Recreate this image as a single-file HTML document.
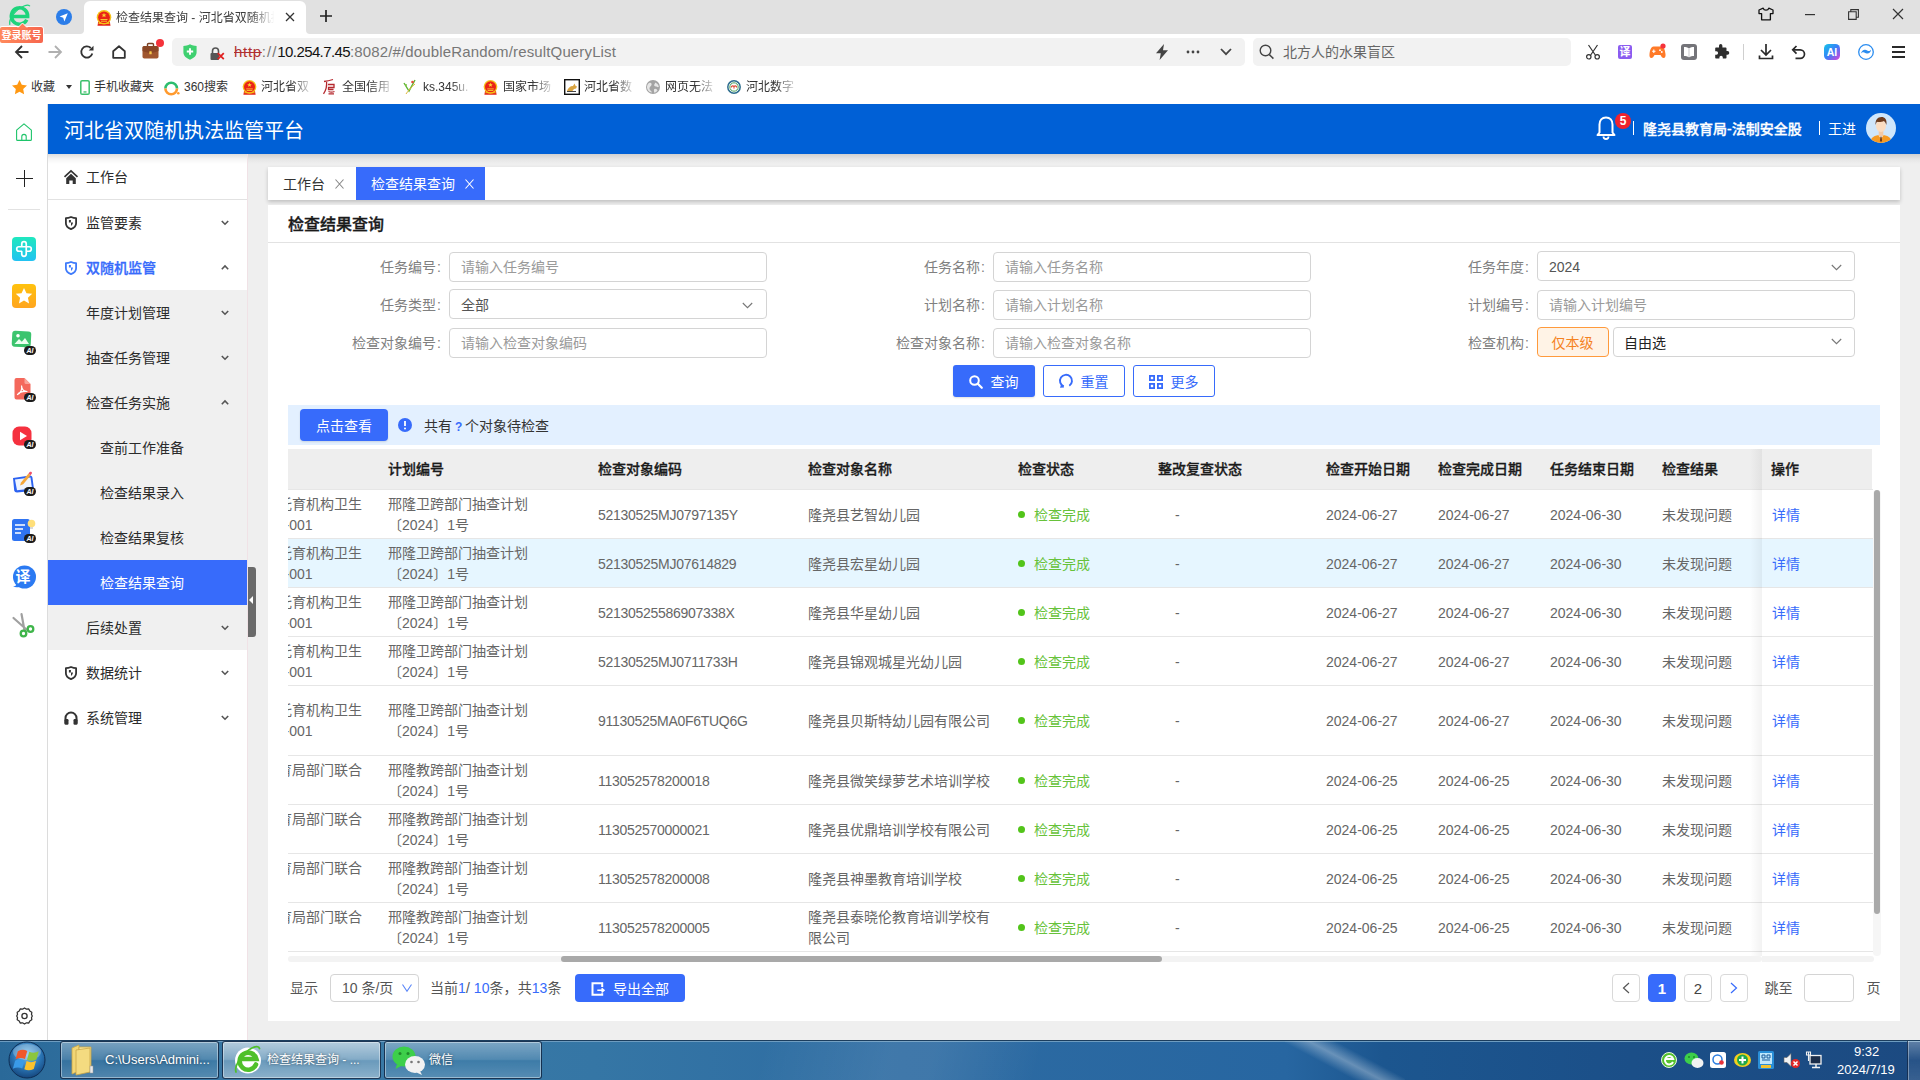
<!DOCTYPE html>
<html lang="zh-CN"><head><meta charset="utf-8"><title>检查结果查询 - 河北省双随机执法监管平台</title>
<style>
*{box-sizing:border-box;margin:0;padding:0}
html,body{width:1920px;height:1080px;overflow:hidden;background:#fff}
body{font-family:"Liberation Sans","Noto Sans CJK SC",sans-serif;font-size:14px;color:#333;position:relative}
.a{position:absolute}
.t{position:absolute;white-space:nowrap;line-height:20px;height:20px}
svg{position:absolute;overflow:visible}
#tabbar{left:0;top:0;width:1920px;height:34px;background:#e1e1e1}
#acttab{left:84px;top:1px;width:222px;height:33px;background:#fff;border-radius:6px 6px 0 0}
#addr{left:0;top:34px;width:1920px;height:36px;background:#fff}
#urlbox{left:172px;top:38px;width:1073px;height:28px;background:#f2f2f2;border-radius:5px}
#sbox{left:1253px;top:38px;width:318px;height:28px;background:#f2f2f2;border-radius:5px}
#bm{left:0;top:70px;width:1920px;height:34px;background:#fff}
.bmt{font-size:12px;color:#333}
#lside{left:0;top:104px;width:48px;height:936px;background:#fff;border-right:1px solid #dcdcdc}
#hdr{left:48px;top:104px;width:1872px;height:50px;background:#0060d6}
#menu{left:48px;top:154px;width:199px;height:886px;background:#fff}
#sub{left:48px;top:290px;width:199px;height:360px;background:#f0f0f0}
#act{left:48px;top:560px;width:199px;height:45px;background:#376bfb}
.mi{font-size:14px;color:#2b2b2b}
#content{left:247px;top:154px;width:1673px;height:886px;background:#efefef;border-left:1px solid #f0e2e6}
#tabs{left:268px;top:167px;width:1632px;height:33px;background:#fff;box-shadow:0 2px 4px rgba(0,0,0,.2)}
#tab2{left:356px;top:167px;width:129px;height:33px;background:#376bfb}
#panel{left:268px;top:205px;width:1632px;height:816px;background:#fff}
.lbl{color:#808080;text-align:right;width:160px}
.inp{position:absolute;height:30px;border:1px solid #d4d4d4;border-radius:4px;background:#fff}
.ph{color:#9a9a9a}
.btn{position:absolute;height:32px;border-radius:3px}
.th{font-weight:500;color:#1a1a1a;-webkit-text-stroke:0.3px}
.td{color:#666}
.row{position:absolute;left:288px;width:1585px;border-bottom:1px solid #e6e6e6}
.ok{color:#67c23a}
.lnk{color:#376bfb}
.pg{position:absolute;top:974px;width:28px;height:28px;border:1px solid #d9d9d9;border-radius:4px;background:#fff;text-align:center;line-height:27px;color:#444;font-size:15px}
#task{left:0;top:1040px;width:1920px;height:40px;background:linear-gradient(90deg,#2a6999 0%,#3a7aa6 15%,#3576a5 31%,#2d6ba2 47%,#2766a1 67%,#1c568f 72%,#1b4f88 85%,#1c4a81 100%);border-top:1px solid #1c3e5e;box-shadow:inset 0 1px 0 #6d9cc0}
.tb{position:absolute;top:1041px;height:38px;border:1px solid rgba(15,40,70,.9);border-radius:3px;box-shadow:inset 0 0 0 1px rgba(255,255,255,.4);background:linear-gradient(180deg,rgba(255,255,255,.35),rgba(255,255,255,.14) 48%,rgba(255,255,255,.04) 52%,rgba(255,255,255,.16))}
.tbt{font-size:12px;color:#fff;text-shadow:0 0 3px rgba(0,0,0,.55)}
.ai{position:absolute;left:24px;width:12px;height:9px;border-radius:5px;background:#1c1c1c;color:#fff;font-size:7px;font-weight:bold;line-height:9px;text-align:center;font-style:italic}
</style></head>
<body>
<!-- browser chrome -->
<div class="a " id="tabbar" style=""></div>
<div class="a " id="acttab" style=""></div>
<svg style="left:80px;top:30px" width="4" height="4" viewBox="0 0 4 4"><path d="M4 0v4H0a4 4 0 0 0 4-4z" fill="#fff"/></svg>
<svg style="left:306px;top:30px" width="4" height="4" viewBox="0 0 4 4"><path d="M0 0v4h4a4 4 0 0 1-4-4z" fill="#fff"/></svg>
<div class="a " id="addr" style=""></div>
<div class="a " id="urlbox" style=""></div>
<div class="a " id="sbox" style=""></div>
<div class="a " id="bm" style=""></div>
<svg style="left:7px;top:3px" width="26" height="26" viewBox="0 0 26 26"><g fill="none" stroke="#1fd47c" stroke-linecap="butt"><path d="M19.800 16.800a8.200 8.200 0 1 1 .9-3.300H5.500" stroke-width="3.500"/><path d="M2.800 21.800C1.500 16 8 7 17 3c3-1.300 5.200-1.300 5.800 .3" stroke-width="1.300"/></g></svg>
<div class="a " style="left:-1px;top:26px;width:45px;height:18px;border:1px solid #fff;border-radius:3px;background:linear-gradient(90deg,#ff8a5c,#f7664e)"></div>
<svg style="left:18px;top:21px" width="9" height="7" viewBox="0 0 9 7"><path d="M0 6.500l4.500-4.500 4.500 4.500" fill="#ff7c58" stroke="#fff" stroke-width="1"/><rect x="1" y="6" width="7" height="1.500" fill="#ff7c58"/></svg>
<div class="t " style="left:1.5px;top:25px;font-size:10px;color:#fff;font-weight:bold;line-height:16px;height:16px;top:27.500px">登录账号</div>
<svg style="left:56px;top:9px" width="16" height="16" viewBox="0 0 16 16"><circle cx="8" cy="8" r="8" fill="#2b7de9"/><path d="M11.8 4.2L3.6 7.6l3.6 1.2 1.2 3.6z" fill="#fff"/></svg>
<svg style="left:96px;top:10px" width="16" height="16" viewBox="0 0 16 16"><g transform="scale(1.000)"><path d="M2.200 11.500h11.600l.7 4.300H1.500z" fill="#e3241b"/><circle cx="8" cy="7.300" r="7.300" fill="#f5c21a"/><circle cx="8" cy="7.300" r="5.900" fill="#ea2416"/><path d="M8 2.800l.7 1.700h1.800l-1.400 1.100.5 1.700L8 6.300l-1.600 1 .5-1.700-1.400-1.100h1.800z" fill="#f9d633"/><path d="M4.500 9.500h7M5 11.200h6" stroke="#f9d633" stroke-width=".9"/><path d="M2.500 13.500h11" stroke="#f5c21a" stroke-width=".9"/></g></svg>
<div class="t " style="left:116px;top:8px;font-size:12px;color:#3c3c3c;width:160px;overflow:hidden;-webkit-mask-image:linear-gradient(90deg,#000 84%,transparent 99%)">检查结果查询 - 河北省双随机执</div>
<svg style="left:285px;top:12.2px" width="10" height="10" viewBox="0 0 10 10"><path d="M1 1l8 8M9 1l-8 8" stroke="#333" stroke-width="1.3" fill="none"/></svg>
<svg style="left:319px;top:9px" width="14" height="14" viewBox="0 0 14 14"><path d="M7 1v12M1 7h12" stroke="#222" stroke-width="1.7" fill="none"/></svg>
<svg style="left:1758px;top:7px" width="16" height="14" viewBox="0 0 16 14"><path d="M5.2 1.2L1 3v3.6h2.6v6.2h8.8V6.6H15V3l-4.2-1.8c-.4 1.4-1.4 2-2.8 2s-2.4-.6-2.800-2z" fill="none" stroke="#111" stroke-width="1.3" stroke-linejoin="round"/></svg>
<svg style="left:1805px;top:14px" width="10" height="1" viewBox="0 0 10 1"><rect width="10" height="1.2" fill="#333"/></svg>
<svg style="left:1848px;top:9px" width="11" height="11" viewBox="0 0 11 11"><path d="M.6 2.8h7.6v7.6H.6zM2.8 2.600V.6h7.6v7.6H8.400" fill="none" stroke="#333" stroke-width="1.1"/></svg>
<svg style="left:1893px;top:9px" width="10" height="10" viewBox="0 0 10 10"><path d="M0 0l10 10M10 0L0 10" stroke="#333" stroke-width="1.2" fill="none"/></svg>
<svg style="left:15px;top:45px" width="14" height="14" viewBox="0 0 14 14"><path d="M13.500 7H1.500M7 1L1 7l6 6" fill="none" stroke="#333" stroke-width="1.8"/></svg>
<svg style="left:48px;top:45px" width="14" height="14" viewBox="0 0 14 14"><path d="M.5 7h12M7 1l6 6-6 6" fill="none" stroke="#b0b0b0" stroke-width="1.8"/></svg>
<svg style="left:80px;top:45px" width="14" height="14" viewBox="0 0 14 14"><path d="M12.300 8.500A5.600 5.600 0 1 1 10.800 3" fill="none" stroke="#333" stroke-width="1.8"/><path d="M13.500.8v4.800H8.700z" fill="#333"/></svg>
<svg style="left:112px;top:45px" width="14" height="14" viewBox="0 0 14 14"><path d="M1.200 6.200L7 1.200l5.800 5v6.600H1.200z" fill="none" stroke="#333" stroke-width="1.8" stroke-linejoin="round"/></svg>
<svg style="left:142px;top:43px" width="17" height="16" viewBox="0 0 17 16"><path d="M5.500 3V1.600C5.500 1 6 .5 6.600.5h3.800c.6 0 1.100.5 1.100 1.100V3" fill="none" stroke="#7a3f22" stroke-width="1.400"/><rect x=".5" y="3" width="16" height="12.500" rx="1.800" fill="#a0562e"/><path d="M.5 4.800C.5 3.800 1.300 3 2.300 3h12.400c1 0 1.800.8 1.800 1.800V8c-2.500 1.200-5.200 1.800-8 1.800S3 9.200.5 8z" fill="#8a4726"/><rect x="7.300" y="8.300" width="2.400" height="3" rx=".5" fill="#f5c84a"/></svg>
<svg style="left:156px;top:39px" width="8" height="8" viewBox="0 0 8 8"><circle cx="4" cy="4" r="4" fill="#f5333b"/></svg>
<svg style="left:183px;top:44px" width="14" height="16" viewBox="0 0 14 16"><path d="M7 .3C4.800 1.400 2.600 2 .4 2v6.300c0 3.300 2.600 5.900 6.600 7.400 4-1.500 6.600-4.100 6.600-7.400V2C11.400 2 9.200 1.400 7 .3z" fill="#3fd070"/><path d="M7 4.300v6.400M3.800 7.500h6.400" stroke="#fff" stroke-width="1.900"/></svg>
<svg style="left:208px;top:46px" width="18" height="18" viewBox="0 0 18 18"><path d="M4.500 7V5a3 3 0 0 1 6 0v2" fill="none" stroke="#555" stroke-width="1.600"/><rect x="2.500" y="7" width="8.500" height="7" rx="1" fill="#555"/><path d="M9.800 7.200l6 6M15.800 7.200l-6 6" stroke="#e02020" stroke-width="1.800"/></svg>
<div class="t " style="left:234px;top:42px;font-size:15px"><span style="color:#b03030;text-decoration:line-through;letter-spacing:0.7px">http</span><span style="color:#777;letter-spacing:1.0px">://</span><span style="color:#111;letter-spacing:-0.6px">10.254.7.45</span><span style="color:#777;letter-spacing:0.14px">:8082/#/doubleRandom/resultQueryList</span></div>
<svg style="left:1156px;top:44px" width="12" height="16" viewBox="0 0 12 16"><path d="M8 0L0 9.200h4.800L3.600 16 12 6.200H7z" fill="#444"/></svg>
<svg style="left:1186px;top:50px" width="14" height="4" viewBox="0 0 14 4"><circle cx="2" cy="2" r="1.400" fill="#444"/><circle cx="7" cy="2" r="1.400" fill="#444"/><circle cx="12" cy="2" r="1.400" fill="#444"/></svg>
<svg style="left:1220px;top:48px" width="12" height="8" viewBox="0 0 12 8"><path d="M1 1l5 5.200L11 1" fill="none" stroke="#444" stroke-width="1.800"/></svg>
<svg style="left:1259px;top:44px" width="16" height="16" viewBox="0 0 16 16"><circle cx="6.500" cy="6.500" r="5.300" fill="none" stroke="#444" stroke-width="1.400"/><path d="M10.400 10.600l4 4" stroke="#444" stroke-width="1.500"/></svg>
<div class="t " style="left:1283px;top:42px;font-size:14px;color:#666">北方人的水果盲区</div>
<svg style="left:1586px;top:45px" width="14" height="15" viewBox="0 0 14 15"><path d="M2.500 0l6.800 10M11.500 0L4.700 10" stroke="#333" stroke-width="1.200" fill="none"/><circle cx="2.800" cy="11.800" r="2.200" fill="none" stroke="#333" stroke-width="1.200"/><circle cx="11.200" cy="11.800" r="2.200" fill="none" stroke="#333" stroke-width="1.200"/></svg>
<div class="a " style="left:1618px;top:45px;width:14px;height:14px;border-radius:2px;background:#8b5cf0"></div>
<div class="t " style="left:1619.5px;top:42px;font-size:11px;color:#fff;font-weight:bold;line-height:14px;height:14px;top:45px">译</div>
<svg style="left:1649px;top:45px" width="17" height="14" viewBox="0 0 17 14"><path d="M4.500 1.500h8c2.500 0 3.600 4 4 7.500.3 2.800-.5 4-1.800 4-1.400 0-2.200-1.200-3.200-3h-6c-1 1.800-1.800 3-3.200 3C1 13 .2 11.800.5 9 .9 5.500 2 1.500 4.500 1.500z" fill="#ff7a28"/><path d="M4.800 4.500v3.400M3.100 6.200h3.400" stroke="#fff" stroke-width="1.100"/><circle cx="11" cy="5.200" r=".9" fill="#fff"/><circle cx="12.800" cy="7" r=".9" fill="#fff"/></svg>
<svg style="left:1660px;top:43px" width="6" height="6" viewBox="0 0 6 6"><circle cx="3" cy="3" r="2.600" fill="#f5333b"/></svg>
<svg style="left:1681px;top:44px" width="16" height="16" viewBox="0 0 16 16"><rect width="16" height="16" rx="3" fill="#747479"/><path d="M8 4.200c-1.500-1-3.200-1.300-5-1.300v9c1.800 0 3.500.3 5 1.300 1.500-1 3.200-1.300 5-1.300v-9c-1.800 0-3.500.3-5 1.300z" fill="#fff"/><path d="M8 4.200v9" stroke="#c9c9cc" stroke-width="1"/></svg>
<svg style="left:1713px;top:44px" width="16" height="16" viewBox="0 0 16 16"><path d="M6 1.800a1.700 1.700 0 0 1 3.400 0V3.500h3.300c.5 0 .8.300.8.800v2.800h1a1.800 1.800 0 0 1 0 3.600h-1v3c0 .5-.3.800-.8.800H9.800v-1.100a1.700 1.700 0 0 0-3.400 0v1.100H3c-.5 0-.8-.3-.8-.8v-3h1.200a1.700 1.700 0 0 0 0-3.400H2.200V4.300c0-.5.300-.8.800-.8h3z" fill="#2e2e2e"/></svg>
<div class="a " style="left:1743px;top:44px;width:1px;height:16px;background:#cfcfcf"></div>
<svg style="left:1759px;top:44px" width="14" height="16" viewBox="0 0 14 16"><path d="M7 0v10.500M2 6l5 5 5-5" fill="none" stroke="#2a2a2a" stroke-width="1.700"/><path d="M.5 11.500v3h13v-3" fill="none" stroke="#2a2a2a" stroke-width="1.700"/></svg>
<svg style="left:1791px;top:45px" width="15" height="15" viewBox="0 0 15 15"><path d="M2 4.800h7.200a4.300 4.300 0 0 1 0 8.600H4.500" fill="none" stroke="#2a2a2a" stroke-width="1.700"/><path d="M5.500 1L1.700 4.800l3.800 3.800" fill="none" stroke="#2a2a2a" stroke-width="1.700"/></svg>
<svg style="left:1824px;top:44px" width="16" height="16" viewBox="0 0 16 16"><defs><linearGradient id="aig" x1="0" y1="0" x2="1" y2="1"><stop offset="0" stop-color="#13c8e8"/><stop offset=".5" stop-color="#3a7df8"/><stop offset="1" stop-color="#e040d8"/></linearGradient></defs><rect width="16" height="16" rx="4.500" fill="url(#aig)"/><text x="8" y="11.800" font-size="10.500" font-weight="bold" fill="#fff" text-anchor="middle" font-family="Liberation Sans,sans-serif">AI</text></svg>
<svg style="left:1858px;top:44px" width="16" height="16" viewBox="0 0 16 16"><circle cx="8" cy="8" r="7.300" fill="#fff" stroke="#2b8df0" stroke-width="1.300"/><path d="M2.800 9.500c1-2.800 3-4.300 5.200-3.500s3.200 2 5.200-.5c-.5 3-2.800 4.800-5.200 3.800S4.800 7.500 2.800 9.500z" fill="#2b8df0"/></svg>
<svg style="left:1892px;top:46px" width="13" height="12" viewBox="0 0 13 12"><path d="M0 1h13M0 6h13M0 11h13" stroke="#2a2a2a" stroke-width="1.900"/></svg>
<svg style="left:12px;top:80px" width="15" height="14" viewBox="0 0 15 14"><path d="M7.500 0l2.300 4.800 5.200.7-3.800 3.600.9 5.100-4.600-2.500-4.600 2.500.9-5.100L0 5.500l5.200-.7z" fill="#ff9812"/></svg>
<svg style="left:66px;top:85px" width="6" height="4" viewBox="0 0 6 4"><path d="M0 0h6L3 4z" fill="#333"/></svg>
<svg style="left:80px;top:80px" width="10" height="15" viewBox="0 0 10 15"><rect x=".8" y=".8" width="8.400" height="13.400" rx="1.300" fill="#fff" stroke="#3cc06c" stroke-width="1.500"/><rect x="3.500" y="11.300" width="3" height="1.300" fill="#3cc06c"/></svg>
<svg style="left:164px;top:80px" width="16" height="15" viewBox="0 0 16 15"><path d="M1.400 8.500a5.800 5.800 0 0 1 11.600 0" fill="none" stroke="#2dbd6e" stroke-width="2.600"/><path d="M13 8.500a5.800 5.800 0 0 1-11.600 0" fill="none" stroke="#ff9a2e" stroke-width="2.600"/><circle cx="14.300" cy="13.300" r="1.300" fill="#ff9a2e"/></svg>
<svg style="left:241.5px;top:79.5px" width="15.0" height="15.0" viewBox="0 0 15.0 15.0"><g transform="scale(0.938)"><path d="M2.200 11.500h11.600l.7 4.300H1.500z" fill="#e3241b"/><circle cx="8" cy="7.300" r="7.300" fill="#f5c21a"/><circle cx="8" cy="7.300" r="5.900" fill="#ea2416"/><path d="M8 2.800l.7 1.700h1.800l-1.400 1.100.5 1.700L8 6.300l-1.600 1 .5-1.700-1.400-1.100h1.800z" fill="#f9d633"/><path d="M4.500 9.500h7M5 11.200h6" stroke="#f9d633" stroke-width=".9"/><path d="M2.500 13.500h11" stroke="#f5c21a" stroke-width=".9"/></g></svg>
<svg style="left:322px;top:79px" width="14" height="16" viewBox="0 0 14 16"><path d="M2 2.500c3-.3 6-1 9-2M4.500 1.800c.5 4.500 0 9-3 13M6 5.500h6v3H6.500v2h5M6.500 12.500c2 .8 4 .8 6 0M6.500 14.800h5.500" fill="none" stroke="#b5282e" stroke-width="1.300"/></svg>
<svg style="left:403px;top:79px" width="14" height="16" viewBox="0 0 14 16"><path d="M1 4l5 8L12 1" fill="none" stroke="#5cb531" stroke-width="1.400"/><path d="M3 15c2-3 5-7 9-10" fill="none" stroke="#e0b83a" stroke-width="1"/><circle cx="9.500" cy="3" r="1.300" fill="#e34a3a"/><circle cx="3" cy="6" r="1" fill="#7dc242"/></svg>
<svg style="left:482.5px;top:79.5px" width="15.0" height="15.0" viewBox="0 0 15.0 15.0"><g transform="scale(0.938)"><path d="M2.200 11.500h11.600l.7 4.300H1.500z" fill="#e3241b"/><circle cx="8" cy="7.300" r="7.300" fill="#f5c21a"/><circle cx="8" cy="7.300" r="5.900" fill="#ea2416"/><path d="M8 2.800l.7 1.700h1.800l-1.400 1.100.5 1.700L8 6.300l-1.600 1 .5-1.700-1.400-1.100h1.800z" fill="#f9d633"/><path d="M4.500 9.500h7M5 11.200h6" stroke="#f9d633" stroke-width=".9"/><path d="M2.500 13.500h11" stroke="#f5c21a" stroke-width=".9"/></g></svg>
<svg style="left:564px;top:79px" width="16" height="16" viewBox="0 0 16 16"><rect x=".7" y=".7" width="14.600" height="14.600" fill="#fff" stroke="#111" stroke-width="1.400"/><path d="M3 12c1-3 3-5 6-5l1.500-2.500 1 2.200 1.500.8-1 2-2 .5-2 2.500z" fill="#d9a441"/><path d="M3 12.500h9" stroke="#444" stroke-width="1"/></svg>
<svg style="left:646px;top:80px" width="14" height="14" viewBox="0 0 14 14"><circle cx="7" cy="7" r="7" fill="#a3a3a3"/><path d="M3 3c2-1 3 .5 2.500 2S3 7 3.500 9s2 1.500 2.500 3.500c-3 0-5-3-5-5.500 0-1.500.8-3 2-4zM9 2.500c2 .5 3.800 2.500 3.800 4.500-1.500.5-2-.5-3-.5s-2-1-1.500-2 .9-1 .7-2zM8.500 9c1.500-.5 2.500.5 3 1.500-.8 1.200-2 2-3.200 2.300C8 11.500 7.500 9.500 8.500 9z" fill="#e6e6e6"/></svg>
<svg style="left:727px;top:80px" width="14" height="14" viewBox="0 0 14 14"><circle cx="7" cy="7" r="6.200" fill="#fff" stroke="#2e6e8e" stroke-width="1.500"/><circle cx="7" cy="7" r="4.200" fill="none" stroke="#4aa05a" stroke-width="1"/><path d="M4.500 7.500a1.300 1.300 0 1 1 2.500 0 1.300 1.300 0 1 1 2.500 0" fill="none" stroke="#e0452e" stroke-width="1.100"/></svg>
<div class="t bmt" style="left:31px;top:77px;">收藏</div>
<div class="t bmt" style="left:94px;top:77px;">手机收藏夹</div>
<div class="t bmt" style="left:184px;top:77px;">360搜索</div>
<div class="t bmt" style="left:261px;top:77px;-webkit-mask-image:linear-gradient(90deg,#000 62%,rgba(0,0,0,.25) 98%);">河北省双</div>
<div class="t bmt" style="left:342px;top:77px;-webkit-mask-image:linear-gradient(90deg,#000 62%,rgba(0,0,0,.25) 98%);">全国信用</div>
<div class="t bmt" style="left:423px;top:77px;-webkit-mask-image:linear-gradient(90deg,#000 62%,rgba(0,0,0,.25) 98%);">ks.345u.</div>
<div class="t bmt" style="left:503px;top:77px;-webkit-mask-image:linear-gradient(90deg,#000 62%,rgba(0,0,0,.25) 98%);">国家市场</div>
<div class="t bmt" style="left:584px;top:77px;-webkit-mask-image:linear-gradient(90deg,#000 62%,rgba(0,0,0,.25) 98%);">河北省数</div>
<div class="t bmt" style="left:665px;top:77px;-webkit-mask-image:linear-gradient(90deg,#000 62%,rgba(0,0,0,.25) 98%);">网页无法</div>
<div class="t bmt" style="left:746px;top:77px;-webkit-mask-image:linear-gradient(90deg,#000 62%,rgba(0,0,0,.25) 98%);">河北数字</div>
<!-- browser sidebar -->
<div class="a " id="lside" style=""></div>
<svg style="left:16px;top:123px" width="16" height="18" viewBox="0 0 16 18"><path d="M.6 7.200L8 .8l7.400 6.400v9.200a1 1 0 0 1-1 1H1.600a1 1 0 0 1-1-1z" fill="none" stroke="#1ec46a" stroke-width="1.100" stroke-linejoin="round"/><path d="M5.800 17.400v-3.800a2.200 2.200 0 0 1 4.400 0v3.800" fill="none" stroke="#1ec46a" stroke-width="1.100"/></svg>
<svg style="left:16px;top:170px" width="17" height="17" viewBox="0 0 17 17"><path d="M8.500 0v17M0 8.500h17" stroke="#222" stroke-width="1"/></svg>
<div class="a " style="left:8px;top:209px;width:32px;height:1px;background:#e2e2e2"></div>
<div class="a " style="left:12px;top:237px;width:24px;height:24px;border-radius:4px;background:linear-gradient(180deg,#1fe8be,#22c2f2)"></div>
<svg style="left:15px;top:240px" width="18" height="18" viewBox="0 0 18 18"><path transform="scale(1.125)" d="M6 5.800V3.500a2 2 0 0 1 4 0v9a2 2 0 0 1-4 0v-2.300M5.800 10H3.500a2 2 0 0 1 0-4h9a2 2 0 0 1 0 4h-2.300" fill="none" stroke="#fff" stroke-width="1.500" stroke-linecap="round"/></svg>
<div class="a " style="left:12px;top:284px;width:24px;height:24px;border-radius:4px;background:linear-gradient(180deg,#ffc20e,#ffa51f)"></div>
<svg style="left:15px;top:287px" width="18" height="18" viewBox="0 0 18 18"><path transform="scale(1.125)" d="M8 .8l2.200 4.700 5.100.6-3.800 3.500 1 5-4.500-2.500-4.500 2.500 1-5L.7 6.100l5.100-.6z" fill="#fff"/></svg>
<svg style="left:12px;top:331px" width="20" height="18" viewBox="0 0 20 18"><rect x="0" y="0" width="19" height="16" rx="3" fill="#3cc46e" transform="rotate(3 9 8)"/><circle cx="6" cy="4.800" r="1.800" fill="#fff"/><path d="M2.500 13l4.500-5 2.800 2.800 3.200-3.800 4 6z" fill="#eafff0"/></svg>
<div class="a ai" style="top:346px">AI</div>
<svg style="left:14px;top:378px" width="17" height="22" viewBox="0 0 17 22"><path d="M2.500 0h8l6 6v13.500a2 2 0 0 1-2 2h-12a2 2 0 0 1-2-2V2a2 2 0 0 1 2-2z" fill="#f4685c"/><path d="M10.500 0l6 6h-4.500a1.500 1.500 0 0 1-1.500-1.500z" fill="#f9a39a"/><path d="M3.500 16.500c3-1.500 4.500-5 4.200-8.500M7.500 8c.5 3.500 2.500 5.500 5.500 5.500M3.500 16.500c2-2.500 6-3.200 9.500-3" fill="none" stroke="#fff" stroke-width="1.200" stroke-linecap="round"/></svg>
<div class="a ai" style="top:393px">AI</div>
<svg style="left:12px;top:426px" width="20" height="20" viewBox="0 0 20 20"><rect x=".5" y=".5" width="19" height="19" rx="6.500" fill="#f5313f"/><path d="M8 5.800v8.400l7-4.200z" fill="#fff"/></svg>
<div class="a ai" style="top:440px">AI</div>
<svg style="left:11px;top:470px" width="25" height="24" viewBox="0 0 25 24"><path d="M2 8l17-2.500c1.500 0 2.500 1 2.500 2.500L23 19c0 1.200-1 2-2 2L6 22.500c-1.500 0-2.500-.8-2.800-2z" fill="#2c62f0"/><path d="M4 9.500l15.500-2L21 18.500 6 20.300z" fill="#eef4ff"/><path d="M9 15.500l1-3 7.500-9 2.200 1.800-7.500 9z" fill="#f5a73a"/><path d="M17.500 3.500l1.200-1.500c.5-.5 1.200-.5 1.800 0s.7 1.200.2 1.800l-1.200 1.500z" fill="#f0506a"/></svg>
<div class="a ai" style="top:487px">AI</div>
<svg style="left:12px;top:518px" width="24" height="24" viewBox="0 0 24 24"><rect x="0" y="1" width="18" height="22" rx="2.500" fill="#2f74f2"/><path d="M3 7h10M3 11h8M3 15h6" stroke="#fff" stroke-width="1.700"/><circle cx="19.500" cy="5.500" r="3.800" fill="#ffdf7a"/><rect x="18" y="9" width="3" height="2" fill="#d9d9d9"/></svg>
<div class="a ai" style="top:534px">AI</div>
<svg style="left:12px;top:565px" width="24" height="24" viewBox="0 0 24 24"><circle cx="12.500" cy="12" r="11.500" fill="#2b7af2"/><path d="M1 21.500c2 0 3.500-1 4-3l3 3c-2 1.200-5 1-7 0z" fill="#2b7af2"/></svg>
<div class="t " style="left:15.5px;top:567px;font-size:15px;font-weight:bold;color:#fff">译</div>
<svg style="left:12px;top:612px" width="24" height="28" viewBox="0 0 24 28"><path d="M1.500 6l13 11.500M9.500 2l3 16.500" stroke="#a0a0a0" stroke-width="2.200" stroke-linecap="round"/><circle cx="11.500" cy="21.500" r="2.800" fill="none" stroke="#3fb54a" stroke-width="2.300"/><circle cx="18.500" cy="17" r="2.800" fill="none" stroke="#3fb54a" stroke-width="2.300"/></svg>
<svg style="left:16px;top:1007px" width="17" height="18" viewBox="0 0 17 18"><path d="M8.500 1l2 1.200 2.300-.2 1 2 2 1.200-.3 2.300.8 1.500-.8 1.500.3 2.300-2 1.200-1 2-2.300-.2-2 1.200-2-1.200-2.300.2-1-2-2-1.200.3-2.300L.700 9l.8-1.500-.3-2.300 2-1.200 1-2 2.300.2z" fill="none" stroke="#333" stroke-width="1.300" stroke-linejoin="round"/><circle cx="8.500" cy="9" r="2.600" fill="none" stroke="#333" stroke-width="1.300"/></svg>
<!-- app header -->
<div class="a " id="hdr" style=""></div>
<div class="t " style="left:64px;top:120px;font-size:20px;color:#fff;line-height:28px;height:28px;top:116.500px">河北省双随机执法监管平台</div>
<svg style="left:1596px;top:116px" width="20" height="24" viewBox="0 0 20 24"><path d="M10 1.500c-4 0-6.500 3-6.500 7v8L1.500 19h17l-2-2.500v-8c0-4-2.500-7-6.500-7z" fill="none" stroke="#fff" stroke-width="2" stroke-linejoin="round"/><path d="M7.500 20.500a2.500 2.500 0 0 0 5 0" fill="none" stroke="#fff" stroke-width="1.800"/></svg>
<div class="a " style="left:1615px;top:113px;width:16px;height:16px;border-radius:50%;background:#f0222e;color:#fff;font-size:12px;font-weight:bold;text-align:center;line-height:16px">5</div>
<div class="a " style="left:1633px;top:121px;width:1px;height:14px;background:#fff"></div>
<div class="t " style="left:1643px;top:118.5px;color:#fff;font-weight:500;-webkit-text-stroke:0.3px">隆尧县教育局-法制安全股</div>
<div class="a " style="left:1819px;top:121px;width:1px;height:14px;background:#fff"></div>
<div class="t " style="left:1828px;top:118.5px;color:#fff">王进</div>
<svg style="left:1866px;top:113px" width="30" height="30" viewBox="0 0 30 30"><defs><clipPath id="avc"><circle cx="15" cy="15" r="15"/></clipPath></defs><circle cx="15" cy="15" r="15" fill="#cfe6fb"/><g clip-path="url(#avc)"><path d="M4 31c0-6 4-9 11-9s11 3 11 9z" fill="#f59a23"/><path d="M12.500 22l2.500 4 2.500-4z" fill="#fff"/><path d="M14.400 23.500h1.200l.5 5h-2.200z" fill="#6b3a1e"/><rect x="12.700" y="17" width="4.600" height="6" fill="#f3c9a5"/><ellipse cx="15" cy="13" rx="5" ry="6" fill="#fbdcc0"/><path d="M9.600 12c-.6-5 2-8 5.800-8 3.500 0 5.800 2.500 5 8-.6-2-1.500-3.300-2.500-4-2 1-5 1.200-7 .8-.6.800-1 1.800-1.300 3.200z" fill="#6e3d1f"/></g></svg>
<!-- side menu -->
<div class="a " id="menu" style=""></div>
<div class="a " id="sub" style=""></div>
<div class="a " id="act" style=""></div>
<div class="a " style="left:48px;top:199px;width:199px;height:1px;background:#e2e2e2"></div>
<div class="a " style="left:48px;top:154px;width:199px;height:10px;background:linear-gradient(180deg,rgba(0,0,0,.13),rgba(0,0,0,.04) 50%,rgba(0,0,0,0))"></div>
<div class="t mi" style="left:86px;top:167px;">工作台</div>
<div class="t mi" style="left:86px;top:213px;">监管要素</div>
<div class="t mi" style="left:86px;top:258px;color:#376bfb;font-weight:500;-webkit-text-stroke:0.3px">双随机监管</div>
<div class="t mi" style="left:86px;top:303px;">年度计划管理</div>
<div class="t mi" style="left:86px;top:348px;">抽查任务管理</div>
<div class="t mi" style="left:86px;top:393px;">检查任务实施</div>
<div class="t mi" style="left:100px;top:438px;">查前工作准备</div>
<div class="t mi" style="left:100px;top:483px;">检查结果录入</div>
<div class="t mi" style="left:100px;top:528px;">检查结果复核</div>
<div class="t mi" style="left:100px;top:573px;color:#fff">检查结果查询</div>
<div class="t mi" style="left:86px;top:618px;">后续处置</div>
<div class="t mi" style="left:86px;top:663px;">数据统计</div>
<div class="t mi" style="left:86px;top:708px;">系统管理</div>
<svg style="left:64px;top:170px" width="14" height="14" viewBox="0 0 14 14"><path d="M.5 6.800L7 .800l6.500 6" fill="none" stroke="#333" stroke-width="1.700"/><path d="M2.200 8.200L7 3.800l4.800 4.400V14H8.700v-3.400H5.300V14H2.200z" fill="#333"/></svg>
<svg style="left:65px;top:216px" width="12" height="14" viewBox="0 0 12 14"><path d="M6 1c1.700.700 3.400 1.100 5.100 1.100v5.200c0 2.700-1.900 4.700-5.100 5.900C2.800 12 .9 10 .9 7.300V2.100C2.600 2.100 4.300 1.700 6 1z" fill="none" stroke="#333" stroke-width="1.800" stroke-linejoin="round"/><path d="M3.900 3.900h2v2.500h-2zM6 6.600h2c-.2 1.600-.9 2.700-2 3.500z" fill="#333"/></svg>
<svg style="left:65px;top:261px" width="12" height="14" viewBox="0 0 12 14"><path d="M6 1c1.700.700 3.400 1.100 5.100 1.100v5.200c0 2.700-1.900 4.700-5.100 5.900C2.800 12 .9 10 .9 7.300V2.100C2.600 2.100 4.300 1.700 6 1z" fill="none" stroke="#3f7bfb" stroke-width="1.800" stroke-linejoin="round"/><path d="M3.900 3.900h2v2.500h-2zM6 6.600h2c-.2 1.600-.9 2.700-2 3.500z" fill="#3f7bfb"/></svg>
<svg style="left:65px;top:666px" width="12" height="14" viewBox="0 0 12 14"><path d="M6 1c1.700.700 3.400 1.100 5.100 1.100v5.200c0 2.700-1.900 4.700-5.100 5.900C2.800 12 .9 10 .9 7.300V2.100C2.600 2.100 4.300 1.700 6 1z" fill="none" stroke="#333" stroke-width="1.800" stroke-linejoin="round"/><path d="M3.900 3.900h2v2.500h-2zM6 6.600h2c-.2 1.600-.9 2.700-2 3.500z" fill="#333"/></svg>
<svg style="left:64px;top:711px" width="14" height="14" viewBox="0 0 14 14"><path d="M1.500 12.500V7a5.500 5.500 0 0 1 11 0v5.500" fill="none" stroke="#333" stroke-width="2"/><rect x=".5" y="8" width="4" height="5.800" rx="1.200" fill="#333"/><rect x="9.500" y="8" width="4" height="5.800" rx="1.200" fill="#333"/></svg>
<svg style="left:221.0px;top:219.7px" width="8" height="5.0" viewBox="0 0 8 5.0"><path d="M.8 1L4.0 4.2l3.2 -3.2" fill="none" stroke="#555" stroke-width="1.6"/></svg>
<svg style="left:221.0px;top:264.7px" width="8" height="5.0" viewBox="0 0 8 5.0"><path d="M.8 4.2L4.0 1l3.2 3.2" fill="none" stroke="#555" stroke-width="1.6"/></svg>
<svg style="left:221.0px;top:309.7px" width="8" height="5.0" viewBox="0 0 8 5.0"><path d="M.8 1L4.0 4.2l3.2 -3.2" fill="none" stroke="#555" stroke-width="1.6"/></svg>
<svg style="left:221.0px;top:354.7px" width="8" height="5.0" viewBox="0 0 8 5.0"><path d="M.8 1L4.0 4.2l3.2 -3.2" fill="none" stroke="#555" stroke-width="1.6"/></svg>
<svg style="left:221.0px;top:399.7px" width="8" height="5.0" viewBox="0 0 8 5.0"><path d="M.8 4.2L4.0 1l3.2 3.2" fill="none" stroke="#555" stroke-width="1.6"/></svg>
<svg style="left:221.0px;top:624.7px" width="8" height="5.0" viewBox="0 0 8 5.0"><path d="M.8 1L4.0 4.2l3.2 -3.2" fill="none" stroke="#555" stroke-width="1.6"/></svg>
<svg style="left:221.0px;top:669.7px" width="8" height="5.0" viewBox="0 0 8 5.0"><path d="M.8 1L4.0 4.2l3.2 -3.2" fill="none" stroke="#555" stroke-width="1.6"/></svg>
<svg style="left:221.0px;top:714.7px" width="8" height="5.0" viewBox="0 0 8 5.0"><path d="M.8 1L4.0 4.2l3.2 -3.2" fill="none" stroke="#555" stroke-width="1.6"/></svg>
<!-- content -->
<div class="a " id="content" style=""></div>
<div class="a " style="left:248px;top:154px;width:1672px;height:10px;background:linear-gradient(180deg,rgba(0,0,0,.13),rgba(0,0,0,.04) 50%,rgba(0,0,0,0))"></div>
<div class="a " id="tabs" style=""></div>
<div class="a " id="tab2" style=""></div>
<div class="a " id="panel" style=""></div>
<div class="t " style="left:283px;top:174px;color:#333">工作台</div>
<svg style="left:335px;top:179px" width="9" height="10" viewBox="0 0 9 10"><path d="M.5 .5l8 9M8.500 .5l-8 9" stroke="#888" stroke-width="1.100" fill="none"/></svg>
<div class="t " style="left:371px;top:174px;color:#fff">检查结果查询</div>
<svg style="left:465px;top:179px" width="9" height="10" viewBox="0 0 9 10"><path d="M.5 .5l8 9M8.500 .5l-8 9" stroke="#fff" stroke-width="1.100" fill="none"/></svg>
<div class="t " style="left:288px;top:215px;font-size:16px;font-weight:500;-webkit-text-stroke:0.35px;color:#1a1a1a;line-height:24px;height:24px;top:213px">检查结果查询</div>
<div class="a " style="left:268px;top:242px;width:1632px;height:1px;background:#e2e2e2"></div>
<div class="t lbl" style="left:281px;top:257px;">任务编号<span style="margin-left:1px">:</span></div>
<div class="inp" style="left:449px;top:252px;width:318px"></div>
<div class="t ph" style="left:461px;top:257px;">请输入任务编号</div>
<div class="t lbl" style="left:281px;top:295px;">任务类型<span style="margin-left:1px">:</span></div>
<div class="inp" style="left:449px;top:289px;width:318px"></div>
<div class="t " style="left:461px;top:295px;color:#555">全部</div>
<div class="t lbl" style="left:281px;top:333px;">检查对象编号<span style="margin-left:1px">:</span></div>
<div class="inp" style="left:449px;top:328px;width:318px"></div>
<div class="t ph" style="left:461px;top:333px;">请输入检查对象编码</div>
<div class="t lbl" style="left:825px;top:257px;">任务名称<span style="margin-left:1px">:</span></div>
<div class="inp" style="left:993px;top:252px;width:318px"></div>
<div class="t ph" style="left:1005px;top:257px;">请输入任务名称</div>
<div class="t lbl" style="left:825px;top:295px;">计划名称<span style="margin-left:1px">:</span></div>
<div class="inp" style="left:993px;top:290px;width:318px"></div>
<div class="t ph" style="left:1005px;top:295px;">请输入计划名称</div>
<div class="t lbl" style="left:825px;top:333px;">检查对象名称<span style="margin-left:1px">:</span></div>
<div class="inp" style="left:993px;top:328px;width:318px"></div>
<div class="t ph" style="left:1005px;top:333px;">请输入检查对象名称</div>
<div class="t lbl" style="left:1369px;top:257px;">任务年度<span style="margin-left:1px">:</span></div>
<div class="inp" style="left:1537px;top:251px;width:318px"></div>
<div class="t " style="left:1549px;top:257px;color:#555">2024</div>
<div class="t lbl" style="left:1369px;top:295px;">计划编号<span style="margin-left:1px">:</span></div>
<div class="inp" style="left:1537px;top:290px;width:318px"></div>
<div class="t ph" style="left:1549px;top:295px;">请输入计划编号</div>
<div class="t lbl" style="left:1369px;top:333px;">检查机构<span style="margin-left:1px">:</span></div>
<div class="inp" style="left:1537px;top:327px;width:72px;border-color:#ff9a3c;background:#fff3e6"></div>
<div class="t " style="left:1551.5px;top:333px;color:#f5821f">仅本级</div>
<div class="inp" style="left:1613px;top:327px;width:242px"></div>
<div class="t " style="left:1624px;top:333px;color:#222">自由选</div>
<svg style="left:741.5px;top:302.25px" width="11" height="6.5" viewBox="0 0 11 6.5"><path d="M.8 1L5.5 5.7l4.7 -4.7" fill="none" stroke="#777" stroke-width="1.1"/></svg>
<svg style="left:1830.5px;top:264.25px" width="11" height="6.5" viewBox="0 0 11 6.5"><path d="M.8 1L5.5 5.7l4.7 -4.7" fill="none" stroke="#777" stroke-width="1.1"/></svg>
<svg style="left:1830.5px;top:338.25px" width="11" height="6.5" viewBox="0 0 11 6.5"><path d="M.8 1L5.5 5.7l4.7 -4.7" fill="none" stroke="#777" stroke-width="1.1"/></svg>
<div class="btn" style="left:953px;top:365px;width:82px;background:#376bfb;box-shadow:0 1px 2px rgba(0,0,0,.12)"></div>
<svg style="left:969px;top:375px" width="14" height="14" viewBox="0 0 14 14"><circle cx="5.500" cy="5.500" r="4.300" fill="none" stroke="#fff" stroke-width="2"/><path d="M8.800 8.800l4 4" stroke="#fff" stroke-width="2.200" stroke-linecap="round"/></svg>
<div class="t " style="left:990.5px;top:372px;color:#fff">查询</div>
<div class="btn" style="left:1043px;top:365px;width:82px;border:1px solid #376bfb;background:#fff"></div>
<svg style="left:1059px;top:374px" width="14" height="14" viewBox="0 0 14 14"><path d="M4.800 12.400A6 6 0 1 1 10.300 11.800" fill="none" stroke="#376bfb" stroke-width="1.900"/><path d="M2.500 9.500l2.500 4-4 .3z" fill="#376bfb"/></svg>
<div class="t " style="left:1080.5px;top:372px;color:#376bfb">重置</div>
<div class="btn" style="left:1133px;top:365px;width:82px;border:1px solid #376bfb;background:#fff"></div>
<svg style="left:1149px;top:375px" width="14" height="14" viewBox="0 0 14 14"><g fill="none" stroke="#376bfb" stroke-width="1.800"><rect x=".9" y=".9" width="4.200" height="4.200"/><rect x="8.900" y=".9" width="4.200" height="4.200"/><rect x=".9" y="8.900" width="4.200" height="4.200"/><rect x="8.900" y="8.900" width="4.200" height="4.200"/></g></svg>
<div class="t " style="left:1170.5px;top:372px;color:#376bfb">更多</div>
<div class="a " style="left:288px;top:405px;width:1592px;height:40px;background:#e3f0ff"></div>
<div class="btn" style="left:300px;top:409px;width:88px;border-radius:4px;background:#376bfb;box-shadow:0 1px 2px rgba(0,0,0,.12)"></div>
<div class="t " style="left:316px;top:416px;color:#fff">点击查看</div>
<svg style="left:398px;top:418px" width="14" height="14" viewBox="0 0 14 14"><circle cx="7" cy="7" r="7" fill="#376bfb"/><path d="M7 3v5" stroke="#fff" stroke-width="1.800"/><circle cx="7" cy="10.500" r="1" fill="#fff"/></svg>
<div class="t " style="left:424px;top:416px;color:#333;word-spacing:-1px">共有 <b style="color:#376bfb;font-size:12px">?</b> 个对象待检查</div>
<div class="a " style="left:288px;top:449px;width:1584px;height:40px;background:#eeeeee"></div>
<div class="t th" style="left:388px;top:458.5px;">计划编号</div>
<div class="t th" style="left:598px;top:458.5px;">检查对象编码</div>
<div class="t th" style="left:808px;top:458.5px;">检查对象名称</div>
<div class="t th" style="left:1018px;top:458.5px;">检查状态</div>
<div class="t th" style="left:1158px;top:458.5px;">整改复查状态</div>
<div class="t th" style="left:1326px;top:458.5px;">检查开始日期</div>
<div class="t th" style="left:1438px;top:458.5px;">检查完成日期</div>
<div class="t th" style="left:1550px;top:458.5px;">任务结束日期</div>
<div class="t th" style="left:1662px;top:458.5px;">检查结果</div>
<div class="t th" style="left:1771px;top:458.5px;">操作</div>
<div class="a " style="left:288px;top:489px;width:1585px;height:1px;background:#e6e6e6"></div>
<div class="row" style="top:490px;height:49px;"></div>
<div class="a td" style="left:288px;top:494px;width:90px;height:42px;overflow:hidden;line-height:21px;white-space:nowrap"><div style="margin-left:-10px">托育机构卫生<br><span style="margin-left:6.500px">-001</span></div></div>
<div class="a td" style="left:388px;top:494px;line-height:21px;white-space:nowrap">邢隆卫跨部门抽查计划<br>〔2024〕1号</div>
<div class="t td" style="left:598px;top:505px;letter-spacing:-0.28px">52130525MJ0797135Y</div>
<div class="t td" style="left:808px;top:505px;">隆尧县艺智幼儿园</div>
<div class="a" style="left:1018px;top:510.5px;width:7px;height:7px;border-radius:50%;background:#52c41a"></div>
<div class="t ok" style="left:1034px;top:505px;">检查完成</div>
<div class="t td" style="left:1175px;top:505px;">-</div>
<div class="t td" style="left:1326px;top:505px;">2024-06-27</div>
<div class="t td" style="left:1438px;top:505px;">2024-06-27</div>
<div class="t td" style="left:1550px;top:505px;">2024-06-30</div>
<div class="t td" style="left:1662px;top:505px;">未发现问题</div>
<div class="t lnk" style="left:1772px;top:505px;">详情</div>
<div class="row" style="top:539px;height:49px;background:#e6f6ff;"></div>
<div class="a td" style="left:288px;top:543px;width:90px;height:42px;overflow:hidden;line-height:21px;white-space:nowrap"><div style="margin-left:-10px">托育机构卫生<br><span style="margin-left:6.500px">-001</span></div></div>
<div class="a td" style="left:388px;top:543px;line-height:21px;white-space:nowrap">邢隆卫跨部门抽查计划<br>〔2024〕1号</div>
<div class="t td" style="left:598px;top:554px;letter-spacing:-0.28px">52130525MJ07614829</div>
<div class="t td" style="left:808px;top:554px;">隆尧县宏星幼儿园</div>
<div class="a" style="left:1018px;top:559.5px;width:7px;height:7px;border-radius:50%;background:#52c41a"></div>
<div class="t ok" style="left:1034px;top:554px;">检查完成</div>
<div class="t td" style="left:1175px;top:554px;">-</div>
<div class="t td" style="left:1326px;top:554px;">2024-06-27</div>
<div class="t td" style="left:1438px;top:554px;">2024-06-27</div>
<div class="t td" style="left:1550px;top:554px;">2024-06-30</div>
<div class="t td" style="left:1662px;top:554px;">未发现问题</div>
<div class="t lnk" style="left:1772px;top:554px;">详情</div>
<div class="row" style="top:588px;height:49px;"></div>
<div class="a td" style="left:288px;top:592px;width:90px;height:42px;overflow:hidden;line-height:21px;white-space:nowrap"><div style="margin-left:-10px">托育机构卫生<br><span style="margin-left:6.500px">-001</span></div></div>
<div class="a td" style="left:388px;top:592px;line-height:21px;white-space:nowrap">邢隆卫跨部门抽查计划<br>〔2024〕1号</div>
<div class="t td" style="left:598px;top:603px;letter-spacing:-0.28px">52130525586907338X</div>
<div class="t td" style="left:808px;top:603px;">隆尧县华星幼儿园</div>
<div class="a" style="left:1018px;top:608.5px;width:7px;height:7px;border-radius:50%;background:#52c41a"></div>
<div class="t ok" style="left:1034px;top:603px;">检查完成</div>
<div class="t td" style="left:1175px;top:603px;">-</div>
<div class="t td" style="left:1326px;top:603px;">2024-06-27</div>
<div class="t td" style="left:1438px;top:603px;">2024-06-27</div>
<div class="t td" style="left:1550px;top:603px;">2024-06-30</div>
<div class="t td" style="left:1662px;top:603px;">未发现问题</div>
<div class="t lnk" style="left:1772px;top:603px;">详情</div>
<div class="row" style="top:637px;height:49px;"></div>
<div class="a td" style="left:288px;top:641px;width:90px;height:42px;overflow:hidden;line-height:21px;white-space:nowrap"><div style="margin-left:-10px">托育机构卫生<br><span style="margin-left:6.500px">-001</span></div></div>
<div class="a td" style="left:388px;top:641px;line-height:21px;white-space:nowrap">邢隆卫跨部门抽查计划<br>〔2024〕1号</div>
<div class="t td" style="left:598px;top:652px;letter-spacing:-0.28px">52130525MJ0711733H</div>
<div class="t td" style="left:808px;top:652px;">隆尧县锦观城星光幼儿园</div>
<div class="a" style="left:1018px;top:657.5px;width:7px;height:7px;border-radius:50%;background:#52c41a"></div>
<div class="t ok" style="left:1034px;top:652px;">检查完成</div>
<div class="t td" style="left:1175px;top:652px;">-</div>
<div class="t td" style="left:1326px;top:652px;">2024-06-27</div>
<div class="t td" style="left:1438px;top:652px;">2024-06-27</div>
<div class="t td" style="left:1550px;top:652px;">2024-06-30</div>
<div class="t td" style="left:1662px;top:652px;">未发现问题</div>
<div class="t lnk" style="left:1772px;top:652px;">详情</div>
<div class="row" style="top:686px;height:70px;"></div>
<div class="a td" style="left:288px;top:700px;width:90px;height:42px;overflow:hidden;line-height:21px;white-space:nowrap"><div style="margin-left:-10px">托育机构卫生<br><span style="margin-left:6.500px">-001</span></div></div>
<div class="a td" style="left:388px;top:700px;line-height:21px;white-space:nowrap">邢隆卫跨部门抽查计划<br>〔2024〕1号</div>
<div class="t td" style="left:598px;top:711px;letter-spacing:-0.28px">91130525MA0F6TUQ6G</div>
<div class="t td" style="left:808px;top:711px;">隆尧县贝斯特幼儿园有限公司</div>
<div class="a" style="left:1018px;top:716.5px;width:7px;height:7px;border-radius:50%;background:#52c41a"></div>
<div class="t ok" style="left:1034px;top:711px;">检查完成</div>
<div class="t td" style="left:1175px;top:711px;">-</div>
<div class="t td" style="left:1326px;top:711px;">2024-06-27</div>
<div class="t td" style="left:1438px;top:711px;">2024-06-27</div>
<div class="t td" style="left:1550px;top:711px;">2024-06-30</div>
<div class="t td" style="left:1662px;top:711px;">未发现问题</div>
<div class="t lnk" style="left:1772px;top:711px;">详情</div>
<div class="row" style="top:756px;height:49px;"></div>
<div class="a td" style="left:288px;top:760px;width:90px;height:42px;overflow:hidden;line-height:21px;white-space:nowrap"><div style="margin-left:-10px">育局部门联合</div></div>
<div class="a td" style="left:388px;top:760px;line-height:21px;white-space:nowrap">邢隆教跨部门抽查计划<br>〔2024〕1号</div>
<div class="t td" style="left:598px;top:771px;letter-spacing:-0.28px">113052578200018</div>
<div class="t td" style="left:808px;top:771px;">隆尧县微笑绿萝艺术培训学校</div>
<div class="a" style="left:1018px;top:776.5px;width:7px;height:7px;border-radius:50%;background:#52c41a"></div>
<div class="t ok" style="left:1034px;top:771px;">检查完成</div>
<div class="t td" style="left:1175px;top:771px;">-</div>
<div class="t td" style="left:1326px;top:771px;">2024-06-25</div>
<div class="t td" style="left:1438px;top:771px;">2024-06-25</div>
<div class="t td" style="left:1550px;top:771px;">2024-06-30</div>
<div class="t td" style="left:1662px;top:771px;">未发现问题</div>
<div class="t lnk" style="left:1772px;top:771px;">详情</div>
<div class="row" style="top:805px;height:49px;"></div>
<div class="a td" style="left:288px;top:809px;width:90px;height:42px;overflow:hidden;line-height:21px;white-space:nowrap"><div style="margin-left:-10px">育局部门联合</div></div>
<div class="a td" style="left:388px;top:809px;line-height:21px;white-space:nowrap">邢隆教跨部门抽查计划<br>〔2024〕1号</div>
<div class="t td" style="left:598px;top:820px;letter-spacing:-0.28px">113052570000021</div>
<div class="t td" style="left:808px;top:820px;">隆尧县优鼎培训学校有限公司</div>
<div class="a" style="left:1018px;top:825.5px;width:7px;height:7px;border-radius:50%;background:#52c41a"></div>
<div class="t ok" style="left:1034px;top:820px;">检查完成</div>
<div class="t td" style="left:1175px;top:820px;">-</div>
<div class="t td" style="left:1326px;top:820px;">2024-06-25</div>
<div class="t td" style="left:1438px;top:820px;">2024-06-25</div>
<div class="t td" style="left:1550px;top:820px;">2024-06-30</div>
<div class="t td" style="left:1662px;top:820px;">未发现问题</div>
<div class="t lnk" style="left:1772px;top:820px;">详情</div>
<div class="row" style="top:854px;height:49px;"></div>
<div class="a td" style="left:288px;top:858px;width:90px;height:42px;overflow:hidden;line-height:21px;white-space:nowrap"><div style="margin-left:-10px">育局部门联合</div></div>
<div class="a td" style="left:388px;top:858px;line-height:21px;white-space:nowrap">邢隆教跨部门抽查计划<br>〔2024〕1号</div>
<div class="t td" style="left:598px;top:869px;letter-spacing:-0.28px">113052578200008</div>
<div class="t td" style="left:808px;top:869px;">隆尧县神墨教育培训学校</div>
<div class="a" style="left:1018px;top:874.5px;width:7px;height:7px;border-radius:50%;background:#52c41a"></div>
<div class="t ok" style="left:1034px;top:869px;">检查完成</div>
<div class="t td" style="left:1175px;top:869px;">-</div>
<div class="t td" style="left:1326px;top:869px;">2024-06-25</div>
<div class="t td" style="left:1438px;top:869px;">2024-06-25</div>
<div class="t td" style="left:1550px;top:869px;">2024-06-30</div>
<div class="t td" style="left:1662px;top:869px;">未发现问题</div>
<div class="t lnk" style="left:1772px;top:869px;">详情</div>
<div class="row" style="top:903px;height:49px;"></div>
<div class="a td" style="left:288px;top:907px;width:90px;height:42px;overflow:hidden;line-height:21px;white-space:nowrap"><div style="margin-left:-10px">育局部门联合</div></div>
<div class="a td" style="left:388px;top:907px;line-height:21px;white-space:nowrap">邢隆教跨部门抽查计划<br>〔2024〕1号</div>
<div class="t td" style="left:598px;top:918px;letter-spacing:-0.28px">113052578200005</div>
<div class="a td" style="left:808px;top:907px;line-height:21px;white-space:nowrap">隆尧县泰晓伦教育培训学校有<br>限公司</div>
<div class="a" style="left:1018px;top:923.5px;width:7px;height:7px;border-radius:50%;background:#52c41a"></div>
<div class="t ok" style="left:1034px;top:918px;">检查完成</div>
<div class="t td" style="left:1175px;top:918px;">-</div>
<div class="t td" style="left:1326px;top:918px;">2024-06-25</div>
<div class="t td" style="left:1438px;top:918px;">2024-06-25</div>
<div class="t td" style="left:1550px;top:918px;">2024-06-30</div>
<div class="t td" style="left:1662px;top:918px;">未发现问题</div>
<div class="t lnk" style="left:1772px;top:918px;">详情</div>
<div class="a " style="left:1750px;top:449px;width:12px;height:507px;background:linear-gradient(90deg,rgba(0,0,0,0),rgba(0,0,0,.05))"></div>
<div class="a " style="left:1873px;top:490px;width:8px;height:466px;background:#f6f6f6;border-radius:4px"></div>
<div class="a " style="left:1874px;top:490px;width:6px;height:424px;background:#a9a9a9;border-radius:3px"></div>
<div class="a " style="left:288px;top:956px;width:1474px;height:6px;background:#f3f3f3;border-radius:3px"></div>
<div class="a " style="left:1762px;top:956px;width:112px;height:6px;background:#f3f3f3;border-radius:0 3px 3px 0"></div>
<div class="a " style="left:561px;top:956px;width:601px;height:6px;background:#a9a9a9;border-radius:3px"></div>
<div class="t " style="left:290px;top:977.5px;color:#555">显示</div>
<div class="inp" style="left:330px;top:974px;width:89px;height:28px"></div>
<div class="t " style="left:342px;top:977.5px;color:#555">10 条/页</div>
<svg style="left:401.5px;top:983.5px" width="10" height="8" viewBox="0 0 10 8"><path d="M.5 .5L5 7.300 9.500 .5" fill="none" stroke="#5a86f8" stroke-width="1.100"/></svg>
<div class="t " style="left:430px;top:977.5px;color:#555;letter-spacing:0.05px">当前<span class="lnk">1</span>/ <span class="lnk">10</span>条，共<span class="lnk">13</span>条</div>
<div class="btn" style="left:575px;top:974px;width:110px;height:28px;border-radius:4px;background:#376bfb"></div>
<svg style="left:591px;top:982px" width="14" height="14" viewBox="0 0 14 14"><path d="M11.200 5V1.200H1.500v11.600h9.700v-1.600" fill="none" stroke="#fff" stroke-width="2"/><path d="M6.300 8.300h6.200M10.600 6.300l2.300 2-2.300 2" fill="none" stroke="#fff" stroke-width="1.600"/></svg>
<div class="t " style="left:613px;top:978.5px;color:#fff">导出全部</div>
<div class="pg" style="left:1612px"></div><div class="pg" style="left:1648px;background:#376bfb;border-color:#376bfb;color:#fff;font-weight:bold">1</div><div class="pg" style="left:1684px">2</div><div class="pg" style="left:1720px"></div>
<svg style="left:1622px;top:982px" width="8" height="12" viewBox="0 0 8 12"><path d="M7 1L1.500 6l5.500 5" fill="none" stroke="#555" stroke-width="1.200"/></svg>
<svg style="left:1730px;top:982px" width="8" height="12" viewBox="0 0 8 12"><path d="M1 1l5.500 5L1 11" fill="none" stroke="#376bfb" stroke-width="1.200"/></svg>
<div class="t " style="left:1764.5px;top:977.5px;color:#555">跳至</div>
<div class="inp" style="left:1804px;top:974px;width:50px;height:28px"></div>
<div class="t " style="left:1866.5px;top:977.5px;color:#555">页</div>
<div class="a " style="left:248px;top:567px;width:8px;height:70px;background:#6a6a6a;border-radius:0 3px 3px 0"></div>
<svg style="left:249px;top:596px" width="4" height="8" viewBox="0 0 4 8"><path d="M4 0v8L0 4z" fill="#fff"/></svg>
<!-- taskbar -->
<div class="a " id="task" style=""></div>
<div class="a " style="left:700px;top:1041px;width:420px;height:39px;background:linear-gradient(105deg,rgba(255,255,255,0) 15%,rgba(255,255,255,.09) 45%,rgba(255,255,255,.09) 55%,rgba(255,255,255,0) 80%)"></div>
<div class="a " style="left:1285px;top:1041px;width:120px;height:39px;background:linear-gradient(28deg,rgba(255,255,255,0) 36%,rgba(255,255,255,.32) 50%,rgba(255,255,255,0) 64%)"></div>
<div class="tb" style="left:60px;width:159px"></div><div class="tb" style="left:222px;width:159px;background:linear-gradient(180deg,rgba(255,255,255,.62),rgba(255,255,255,.38) 48%,rgba(255,255,255,.25) 52%,rgba(255,255,255,.42))"></div><div class="tb" style="left:384px;width:158px"></div>
<svg style="left:8px;top:1041px" width="38" height="38" viewBox="0 0 38 38"><defs><radialGradient id="orb" cx=".5" cy=".35" r=".7"><stop offset="0" stop-color="#7fc4ee"/><stop offset=".55" stop-color="#2a75b5"/><stop offset="1" stop-color="#123e73"/></radialGradient></defs><circle cx="19" cy="19" r="18" fill="url(#orb)" stroke="#0e2e55" stroke-width="1"/><ellipse cx="19" cy="11" rx="14" ry="8" fill="rgba(255,255,255,.25)"/><g transform="translate(19 19) scale(1.35) translate(-17.800 -19)"><path d="M11 12.500c2.500-1.300 4.800-1.300 7-.200l-1.700 6c-2.200-1.100-4.500-1.100-7 .200z" fill="#f0582a"/><path d="M19.500 12.800c2.200 1.100 4.500 1.100 7-.200l-1.700 6c-2.500 1.300-4.800 1.300-7 .200z" fill="#8cc63f"/><path d="M9 19.500c2.500-1.300 4.800-1.300 7-.200l-1.700 6c-2.200-1.100-4.500-1.100-7 .200z" fill="#3a9be8"/><path d="M17.500 19.800c2.200 1.100 4.500 1.100 7-.200l-1.700 6c-2.500 1.300-4.800 1.300-7 .200z" fill="#fbc22d"/></g></svg>
<svg style="left:70px;top:1044px" width="24" height="32" viewBox="0 0 24 32"><path d="M2 4l7-3v26l-7 3z" fill="#f2d675" stroke="#c9a646" stroke-width=".8"/><path d="M9 3h12v24H9z" fill="#f7e49a" stroke="#c9a646" stroke-width=".8"/><path d="M6 6l14-2v24l-14 3z" fill="#f4db80" stroke="#c9a646" stroke-width=".8"/><rect x="20" y="22" width="3" height="7" fill="#e8e8e8" stroke="#999" stroke-width=".5"/></svg>
<div class="t tbt" style="left:105px;top:1050px;font-size:13px">C:\Users\Admini...</div>
<svg style="left:233px;top:1045px" width="30" height="30" viewBox="0 0 30 30"><circle cx="15" cy="15.500" r="13" fill="#fff"/><g fill="none" stroke="#4fc02a" stroke-linecap="round"><path d="M23 19.500a8.500 8.500 0 1 1 .4-5.500H9" stroke-width="4.600"/><path d="M3 27C1 21 9 8 19 3c3.500-1.800 7-1.800 7.500.5" stroke-width="1.800"/></g></svg>
<div class="t tbt" style="left:267px;top:1050px;">检查结果查询 - ...</div>
<svg style="left:392px;top:1045px" width="34" height="30" viewBox="0 0 34 30"><ellipse cx="12" cy="11.500" rx="11.500" ry="10" fill="#3dcf4a"/><path d="M5 19l-1.500 5 5.500-3z" fill="#3dcf4a"/><circle cx="8" cy="8.500" r="1.500" fill="#1f8a2a"/><circle cx="16" cy="8.500" r="1.500" fill="#1f8a2a"/><ellipse cx="23" cy="19.500" rx="10" ry="8.500" fill="#f2f2f2"/><path d="M28 26l2 4-5.500-2.500z" fill="#f2f2f2"/><circle cx="19.500" cy="17" r="1.300" fill="#777"/><circle cx="26.500" cy="17" r="1.300" fill="#777"/></svg>
<div class="t tbt" style="left:429px;top:1050px;">微信</div>
<svg style="left:1661px;top:1052px" width="16" height="16" viewBox="0 0 16 16"><circle cx="8" cy="8" r="7.500" fill="#55c22e" stroke="#e8f7e0" stroke-width="1"/><path d="M12 10a4.200 4.200 0 1 1 .2-3H5" fill="none" stroke="#fff" stroke-width="2"/></svg>
<svg style="left:1684px;top:1052px" width="20" height="17" viewBox="0 0 20 17"><ellipse cx="7.500" cy="6.500" rx="7" ry="6" fill="#3dcf4a"/><ellipse cx="13.500" cy="11" rx="6" ry="5" fill="#f2f2f2"/><circle cx="5" cy="5" r="1" fill="#1f8a2a"/><circle cx="10" cy="5" r="1" fill="#1f8a2a"/></svg>
<svg style="left:1710px;top:1052px" width="16" height="16" viewBox="0 0 16 16"><rect width="16" height="16" rx="2.500" fill="#fff"/><circle cx="7.500" cy="7.500" r="4.500" fill="none" stroke="#2a7de0" stroke-width="1.500"/><circle cx="11.500" cy="10.500" r="2.300" fill="#e8333a"/></svg>
<svg style="left:1734px;top:1052px" width="17" height="16" viewBox="0 0 17 16"><ellipse cx="8.500" cy="8" rx="8.500" ry="7" fill="#f4d01e"/><circle cx="8.500" cy="8" r="5.500" fill="#1fa84a"/><path d="M8.500 4.500v7M5 8h7" stroke="#fff" stroke-width="2"/></svg>
<svg style="left:1758px;top:1051px" width="16" height="18" viewBox="0 0 16 18"><rect width="16" height="18" rx="1.500" fill="#2a8fd8"/><rect x="2" y="2" width="12" height="11" fill="#bfe6fb"/><path d="M4 4h3v3H4zM9 4h3v3H9zM4 9h8" stroke="#1a5a9a" stroke-width="1" fill="none"/><rect x="3" y="14" width="10" height="3" fill="#f2c230"/></svg>
<svg style="left:1783px;top:1052px" width="18" height="17" viewBox="0 0 18 17"><path d="M1 5.500h3l4-4v13l-4-4H1z" fill="#f2f2f2" stroke="#666" stroke-width=".6"/><circle cx="12.500" cy="11.500" r="4.500" fill="#e02828"/><path d="M10.500 9.500l4 4M14.500 9.500l-4 4" stroke="#fff" stroke-width="1.500"/></svg>
<svg style="left:1806px;top:1051px" width="16" height="18" viewBox="0 0 16 18"><rect x="4" y="4.500" width="11" height="8.500" fill="#1c2e4a" stroke="#f2f2f2" stroke-width="1.300"/><path d="M6 16.500h8M10 13v3" stroke="#f2f2f2" stroke-width="1.500"/><path d="M2.500 1v9M.5 1h4v3h-4z" fill="none" stroke="#f2f2f2" stroke-width="1.100"/></svg>
<div class="t tbt" style="left:1854px;top:1042px;font-size:13px;text-shadow:none">9:32</div>
<div class="t tbt" style="left:1837px;top:1060px;font-size:13px;text-shadow:none">2024/7/19</div>
<div class="a " style="left:1907px;top:1041px;width:13px;height:39px;border-left:1px solid rgba(10,30,60,.7);box-shadow:inset 1px 0 0 rgba(255,255,255,.35);background:linear-gradient(180deg,rgba(255,255,255,.3),rgba(255,255,255,.05) 50%,rgba(255,255,255,.12))"></div>
</body></html>
